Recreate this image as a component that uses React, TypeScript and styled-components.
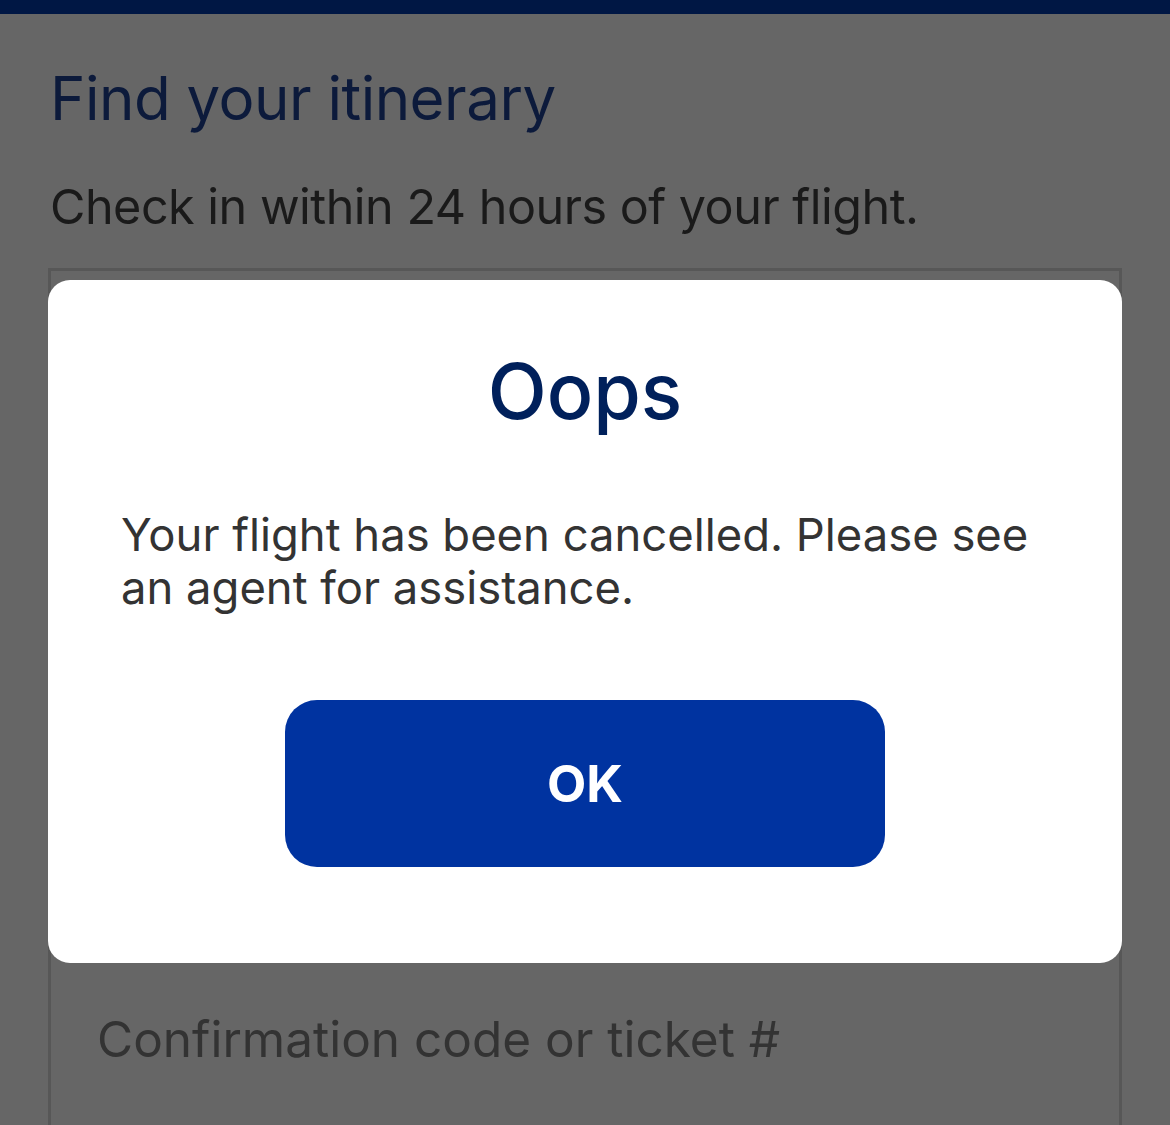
import React from "react";
import styled, { createGlobalStyle } from "styled-components";

const Global = createGlobalStyle`
  html, body { margin: 0; padding: 0; }
  body {
    background: #666666;
    font-family: Inter, "Noto Sans", "Liberation Sans", sans-serif;
    width: 1170px;
    height: 1125px;
    overflow: hidden;
  }
`;

const Screen = styled.div`
  position: relative;
  width: 1170px;
  height: 1125px;
  background: #666666;
  overflow: hidden;
`;

const TopBar = styled.div`
  height: 14px;
  background: #001744;
`;

const Content = styled.main`
  display: flex;
  flex-direction: column;
  padding: 0 48px;
`;

const Title = styled.h1`
  margin: 48px 0 0 2px;
  font-size: 60px;
  font-weight: 400;
  line-height: 72px;
  color: #0c1a3b;
  letter-spacing: -0.5px;
`;

const Subtitle = styled.p`
  margin: 44px 0 0 2px;
  font-size: 48.5px;
  font-weight: 400;
  line-height: 58px;
  color: #1a1a1a;
  letter-spacing: -0.5px;
`;

const Field = styled.div<{ $height: number; $top: number }>`
  margin-top: ${(p) => p.$top}px;
  height: ${(p) => p.$height}px;
  border: 3px solid #575757;
  display: flex;
  align-items: flex-start;
  padding: 72px 0 0 46px;
  box-sizing: border-box;
  font-size: 49.5px;
  line-height: 60px;
  color: #333333;
`;

const Modal = styled.div`
  position: absolute;
  left: 48px;
  top: 280px;
  width: 1074px;
  height: 683px;
  background: #ffffff;
  border-radius: 22px;
  box-sizing: border-box;
  padding: 66px 73px 0;
  display: flex;
  flex-direction: column;
  align-items: stretch;
`;

const ModalTitle = styled.h2`
  margin: 0;
  text-align: center;
  font-size: 77px;
  font-weight: 500;
  line-height: 90px;
  color: #00205b;
`;

const ModalText = styled.p`
  margin: 72px 0 0;
  font-size: 45.4px;
  line-height: 53px;
  color: #333333;
`;

const OkButton = styled.button`
  align-self: center;
  margin-top: 86px;
  width: 600px;
  height: 167px;
  border: none;
  border-radius: 32px;
  background: #0033a0;
  color: #ffffff;
  font-family: inherit;
  font-size: 51px;
  font-weight: 700;
`;

export default function App() {
  return (
    <>
      <Global />
      <Screen>
        <TopBar />
        <Content>
          <Title>Find your itinerary</Title>
          <Subtitle>Check in within 24 hours of your flight.</Subtitle>
          <Field $top={32} $height={664} />
          <Field $top={2} $height={200}>Confirmation code or ticket #</Field>
        </Content>
        <Modal role="dialog">
          <ModalTitle>Oops</ModalTitle>
          <ModalText>
            Your flight has been cancelled. Please see an agent for assistance.
          </ModalText>
          <OkButton>OK</OkButton>
        </Modal>
      </Screen>
    </>
  );
}
